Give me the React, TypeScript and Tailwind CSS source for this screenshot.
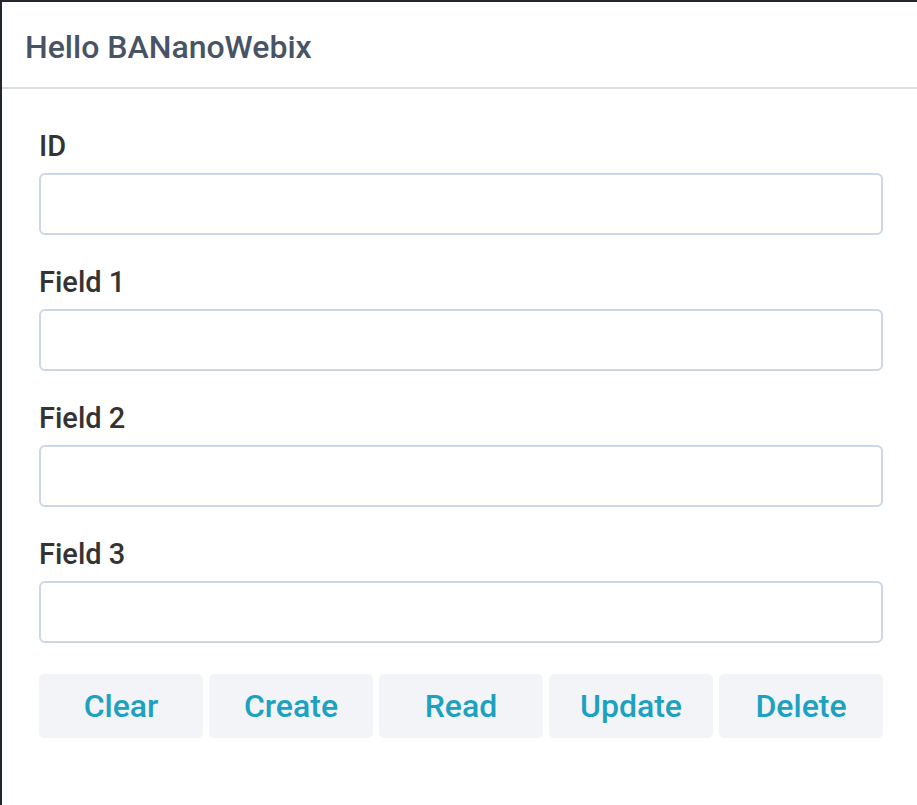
import React from "react";

const fields = ["ID", "Field 1", "Field 2", "Field 3"];
const actions = ["Clear", "Create", "Read", "Update", "Delete"];

export default function App() {
  return (
    <div className="w-[917px] h-[805px] bg-white border-t-2 border-l-2 border-[#22282e] font-['Roboto',sans-serif] overflow-hidden">
      <header className="h-[87px] border-b-2 border-[#dadee1] pl-[23px] pt-[27px]">
        <h1 className="text-[32px] leading-[36px] font-medium text-[#475466]">Hello BANanoWebix</h1>
      </header>

      <form className="pl-[37px] pr-[34px] pt-[41px] flex flex-col">
        {fields.map((f) => (
          <div key={f} className="mb-[31px] last:mb-[28px]">
            <label className="block text-[29px] leading-[32px] font-medium text-[#333333] mb-[11px]">{f}</label>
            <input
              type="text"
              className="block w-full h-[62px] rounded-[6px] border-2 border-[#ccd7e6] bg-white outline-none"
            />
          </div>
        ))}

        <div className="grid grid-cols-5 gap-[6px]">
          {actions.map((a) => (
            <button
              key={a}
              type="button"
              className="h-[64px] rounded-[5px] bg-[#f2f4f7] text-[#1ca1c1] text-[32px] font-medium leading-none"
            >
              {a}
            </button>
          ))}
        </div>
      </form>
    </div>
  );
}
